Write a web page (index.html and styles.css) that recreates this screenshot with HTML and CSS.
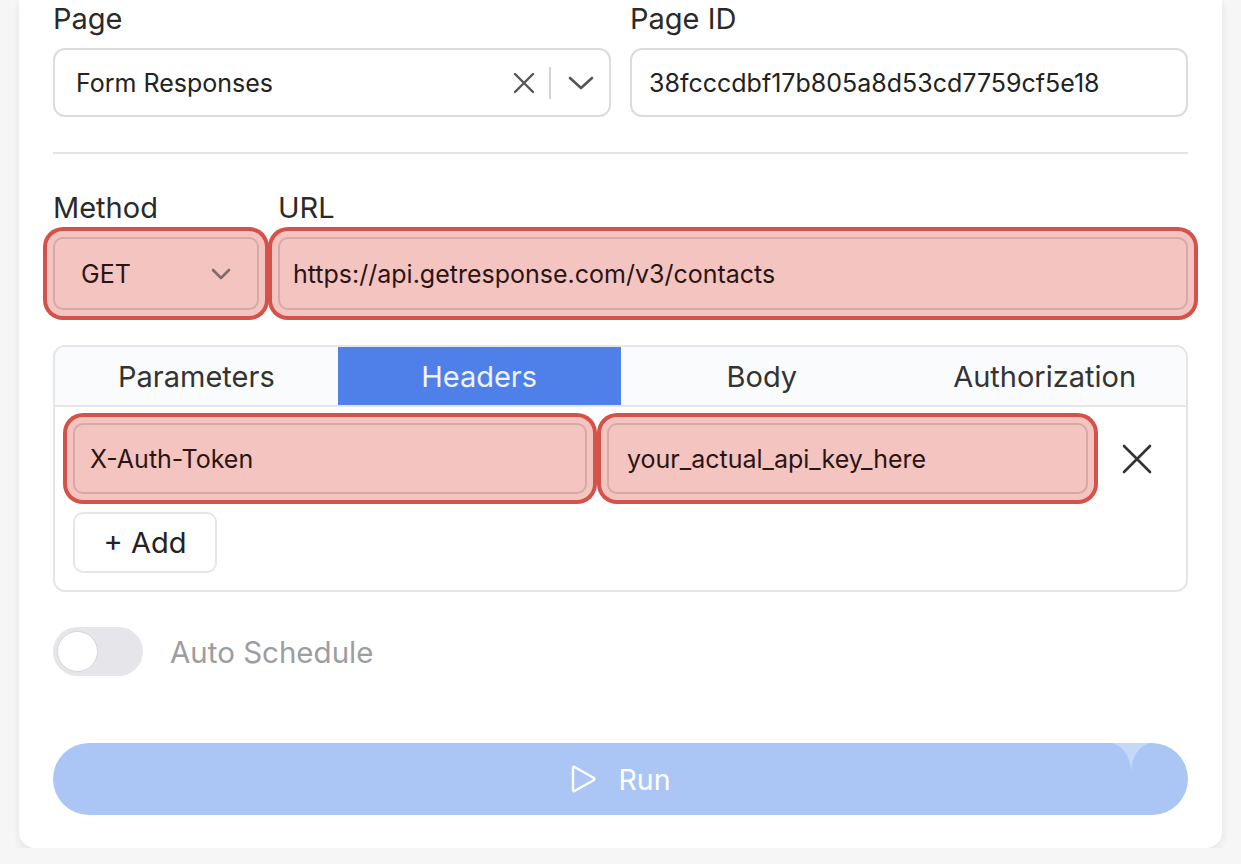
FILE: index.html
```html
<!DOCTYPE html>
<html lang="en">
<head>
    <meta charset="UTF-8">
    <meta name="viewport" content="width=device-width, initial-scale=1.0">
    <title>Request</title>
    <link rel="stylesheet" href="styles.css">
</head>
<body>
    <div class="card">
        <div class="page-row">
            <div class="field">
                <div class="label">Page</div>
                <div class="input select">
                    <span class="value">Form Responses</span>
                    <span class="sel-icons">
                        <svg class="ic-x" width="22" height="22" viewBox="0 0 22 22"><path d="M2 2L20 20M20 2L2 20" stroke="#555" stroke-width="2.4" stroke-linecap="round"/></svg>
                        <span class="sep"></span>
                        <svg class="ic-down" width="26" height="16" viewBox="0 0 26 16"><path d="M2 3L13 13L24 3" stroke="#555" stroke-width="2.6" fill="none" stroke-linecap="round" stroke-linejoin="round"/></svg>
                    </span>
                </div>
            </div>
            <div class="field">
                <div class="label">Page ID</div>
                <div class="input id-input">38fcccdbf17b805a8d53cd7759cf5e18</div>
            </div>
        </div>

        <div class="divider"></div>

        <div class="req-row">
            <div class="field">
                <div class="label">Method</div>
                <div class="input hl method">
                    <span>GET</span>
                    <svg width="20" height="12" viewBox="0 0 20 12"><path d="M2 2L10 10L18 2" stroke="#806c6b" stroke-width="2.6" fill="none" stroke-linecap="round" stroke-linejoin="round"/></svg>
                </div>
            </div>
            <div class="field">
                <div class="label">URL</div>
                <div class="input hl url">https://api.getresponse.com/v3/contacts</div>
            </div>
        </div>

        <div class="tabs">
            <div class="tab-bar">
                <div class="tab">Parameters</div>
                <div class="tab active">Headers</div>
                <div class="tab">Body</div>
                <div class="tab">Authorization</div>
            </div>
            <div class="tab-body">
                <div class="header-row">
                    <div class="input hl key">X-Auth-Token</div>
                    <div class="input hl val">your_actual_api_key_here</div>
                    <div class="remove">
                        <svg width="32" height="32" viewBox="0 0 32 32"><path d="M3 3L29 29M29 3L3 29" stroke="#333" stroke-width="2.6" stroke-linecap="round"/></svg>
                    </div>
                </div>
                <button class="add-btn">+ Add</button>
            </div>
        </div>

        <div class="toggle-row">
            <div class="toggle"><span class="knob"></span></div>
            <span class="toggle-text">Auto Schedule</span>
        </div>

        <button class="run-btn">
            <svg width="28" height="32" viewBox="0 0 28 32"><path d="M5 4.2Q3 3 3 5.4V26.6Q3 29 5 27.8L23.5 17.2Q25.5 16 23.5 14.8Z" stroke="#fff" stroke-width="2.4" fill="none" stroke-linejoin="round"/></svg>
            <span>Run</span>
            <svg class="notch" width="38" height="28" viewBox="0 0 38 28"><path d="M0 0Q17 5 19 28Q21 5 38 0Z" fill="#c6d8f7"/></svg>
        </button>
    </div>
</body>
</html>
```

FILE: styles.css
```css
*{
    margin: 0;
    padding: 0;
    box-sizing: border-box;
}
body{
    background-color: #f6f6f7;
    font-family: Inter, "Noto Sans", sans-serif;
    color: #222;
}
.card{
    margin: 0 19px;
    padding: 2px 34px 33px;
    background-color: #fff;
    border-radius: 0 0 16px 16px;
    box-shadow: 0 4px 10px rgba(0,0,0,0.08);
}
.label{
    font-size: 29px;
    line-height: 34px;
    color: #2a2a2a;
    margin-bottom: 12px;
}
.input{
    display: flex;
    align-items: center;
    border: 2px solid #dcdce0;
    border-radius: 12px;
    font-size: 25px;
    color: #222;
    background-color: #fff;
}
.page-row{
    display: grid;
    grid-template-columns: 1fr 1fr;
    column-gap: 19px;
}
.select{
    height: 69px;
    padding: 0 15px 0 21px;
    justify-content: space-between;
}
.sel-icons{
    display: flex;
    align-items: center;
}
.sep{
    width: 2px;
    height: 32px;
    background-color: #d4d4d8;
    margin: 0 17px 0 14px;
}
.id-input{
    height: 69px;
    padding-left: 17px;
}
.divider{
    height: 2px;
    background-color: #e4e4e7;
    margin: 35px 0 37px;
}
.req-row{
    display: grid;
    grid-template-columns: 206px 1fr;
    column-gap: 19px;
}
.hl{
    background-color: #f3c4c0;
    border-color: #d5a9a6;
    border-radius: 10px;
    box-shadow: 0 0 0 6px #f3c4c0, 0 0 0 10px #d5524a;
    color: #2b1414;
}
.method{
    height: 73px;
    padding: 0 26px 0 26px;
    justify-content: space-between;
}
.url{
    height: 73px;
    padding-left: 13px;
}
.tabs{
    margin-top: 35px;
    border: 2px solid #e6e6ea;
    border-radius: 12px;
    overflow: hidden;
}
.tab-bar{
    display: grid;
    grid-template-columns: repeat(4, 1fr);
    height: 60px;
    background-color: #fafbfc;
    border-bottom: 2px solid #e6e6ea;
}
.tab{
    display: flex;
    align-items: center;
    justify-content: center;
    font-size: 29px;
    color: #333;
}
.tab.active{
    background-color: #4f80ea;
    color: #eef3fd;
}
.tab-body{
    padding: 16px 20px 17px 18px;
}
.header-row{
    display: grid;
    grid-template-columns: 514fr 481fr 58px;
    column-gap: 20px;
    height: 71px;
}
.key{
    padding-left: 15px;
}
.val{
    padding-left: 18px;
}
.remove{
    display: flex;
    align-items: center;
    justify-content: center;
}
.add-btn{
    margin-top: 18px;
    width: 144px;
    height: 61px;
    border: 2px solid #e6e6ea;
    border-radius: 10px;
    background-color: #fff;
    font-family: inherit;
    font-size: 29px;
    color: #222;
}
.toggle-row{
    display: flex;
    align-items: center;
    margin-top: 35px;
}
.toggle{
    position: relative;
    width: 90px;
    height: 49px;
    border-radius: 25px;
    background-color: #e6e6ea;
}
.knob{
    position: absolute;
    left: 4px;
    top: 4px;
    width: 41px;
    height: 41px;
    border-radius: 50%;
    background-color: #fff;
    border: 1.5px solid #d6d6da;
}
.toggle-text{
    margin-left: 27px;
    font-size: 29.5px;
    color: #9d9d9f;
}
.run-btn{
    position: relative;
    display: flex;
    align-items: center;
    justify-content: center;
    gap: 20px;
    width: 100%;
    height: 72px;
    margin-top: 67px;
    border: none;
    border-radius: 36px;
    background-color: #abc6f4;
    font-family: inherit;
    font-size: 28.5px;
    color: #fff;
}
.notch{
    position: absolute;
    top: 0;
    right: 38px;
}
```
